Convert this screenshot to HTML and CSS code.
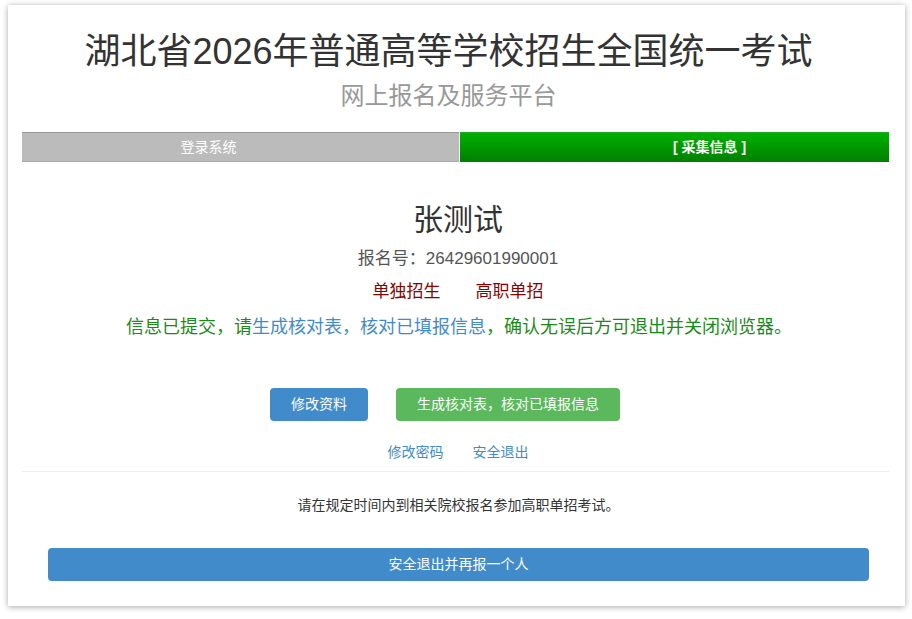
FILE: index.html
```html
<!DOCTYPE html>
<html lang="zh-CN">
<head>
  <meta charset="UTF-8" />
  <meta name="viewport" content="width=device-width, initial-scale=1.0" />
  <title>网上报名及服务平台</title>
  <link rel="stylesheet" href="styles.css">
</head>
<body>
  <div class="page">
    <div class="header">
      <h1 class="title">湖北省2026年普通高等学校招生全国统一考试</h1>
      <div class="subtitle">网上报名及服务平台</div>
    </div>

    <div class="steps">
      <div class="step step-done">登录系统</div>
      <div class="step step-active">[ 采集信息 ]</div>
    </div>

    <div class="student">
      <div class="student-name">张测试</div>
      <div class="student-no">报名号：26429601990001</div>
      <div class="student-types">
        <span>单独招生</span>
        <span>高职单招</span>
      </div>
      <div class="student-tip">
        信息已提交，请<a href="#">生成核对表，核对已填报信息</a>，确认无误后方可退出并关闭浏览器。
      </div>
    </div>

    <div class="actions">
      <a href="#" class="btn btn-primary">修改资料</a>
      <a href="#" class="btn btn-success">生成核对表，核对已填报信息</a>
    </div>

    <div class="links">
      <a href="#">修改密码</a>
      <a href="#">安全退出</a>
    </div>

    <hr class="divider">

    <p class="note">请在规定时间内到相关院校报名参加高职单招考试。</p>

    <a href="#" class="btn btn-primary btn-block">安全退出并再报一个人</a>
  </div>
</body>
</html>
```

FILE: styles.css
```css
html, body {
  margin: 0;
  padding: 0;
  background-color: #fff;
}
body {
  font-family: "Liberation Sans", Arial, "Noto Sans CJK SC", sans-serif;
  color: #333;
  padding: 5px 7px 10px 8px;
}
a { text-decoration: none; }

.page {
  background-color: #fff;
  box-shadow: 0 1px 6px rgba(0, 0, 0, 0.35);
  padding: 25px 16px 25px 14px;
}

/* header */
.header {
  text-align: center;
  padding-right: 14px;
}
.title {
  margin: 0;
  font-size: 36px;
  font-weight: normal;
  line-height: 44px;
  color: #333;
}
.subtitle {
  margin-top: 7px;
  font-size: 24px;
  line-height: 30px;
  color: #999;
}

/* progress steps */
.steps {
  display: flex;
  margin-top: 21px;
  height: 30px;
}
.step {
  line-height: 30px;
  font-size: 14px;
  color: #fff;
  text-align: center;
  box-sizing: border-box;
}
.step-done {
  width: 437px;
  padding-right: 64px;
  background-color: #bbb;
  border-top: 1px solid #999;
  border-bottom: 1px solid #aaa;
  line-height: 28px;
}
.step-active {
  flex: 1;
  margin-left: 1px;
  padding-left: 70px;
  background: linear-gradient(#00b000, #007f00);
  border-top: 1px solid #2a2;
  line-height: 29px;
  font-weight: bold;
}

/* student info */
.student {
  text-align: center;
  padding-left: 5px;
}
.student-name {
  margin-top: 38px;
  font-size: 30px;
  line-height: 40px;
  color: #333;
}
.student-no {
  margin-top: 4px;
  font-size: 17px;
  line-height: 30px;
  color: #555;
}
.student-types {
  margin-top: 3px;
  font-size: 17px;
  line-height: 30px;
  color: #8b0000;
  display: flex;
  justify-content: center;
  gap: 35px;
}
.student-tip {
  margin: 5px 0 0 2px;
  font-size: 18px;
  line-height: 30px;
  color: #1a8a1a;
}
.student-tip a { color: #428bca; }

/* buttons */
.actions {
  margin-top: 46px;
  display: flex;
  justify-content: center;
  gap: 28px;
  padding-right: 21px;
}
.btn {
  display: inline-block;
  height: 33px;
  line-height: 33px;
  padding: 0 21px;
  font-size: 14px;
  color: #fff;
  border-radius: 4px;
  text-align: center;
}
.btn-primary { background-color: #428bca; }
.btn-success { background-color: #5cb85c; }
.btn-block {
  display: block;
  margin: 33px 20px 0 26px;
  padding: 0;
}

.links {
  margin-top: 21px;
  display: flex;
  justify-content: center;
  gap: 29px;
  padding-left: 5px;
  line-height: 20px;
  font-size: 14px;
}
.links a { color: #428bca; }

.divider {
  margin: 9px 0 0;
  border: 0;
  border-top: 1px solid #eee;
}

.note {
  margin: 23px 0 0;
  padding-left: 6px;
  text-align: center;
  font-size: 14px;
  line-height: 20px;
  color: #333;
}
```
